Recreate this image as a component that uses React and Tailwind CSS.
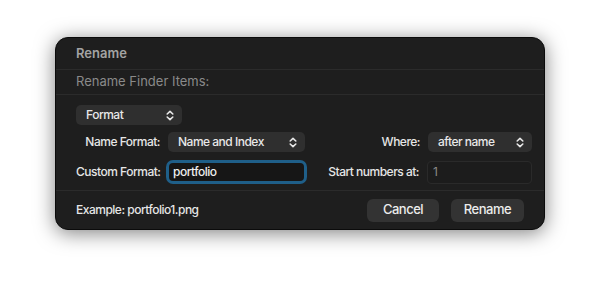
import React from 'react';

function Chevrons() {
  return (
    <svg width="8" height="11" viewBox="0 0 8 11" fill="none" stroke="#e6e6e6" strokeWidth="1.6" strokeLinecap="round" strokeLinejoin="round">
      <path d="M1.2 4 L4 1.3 L6.8 4" />
      <path d="M1.2 7 L4 9.7 L6.8 7" />
    </svg>
  );
}

function Popup({ label, className = '' }) {
  return (
    <div className={`flex items-center justify-between h-[20px] rounded-[5px] bg-[#2f2f2f] pl-[10px] pr-[8px] text-[12px] text-[#e8e8e8] whitespace-nowrap ${className}`}>
      <span>{label}</span>
      <Chevrons />
    </div>
  );
}

export default function App() {
  return (
    <div
      className="w-[600px] h-[304px] bg-white pt-[37px] pl-[55px]"
      style={{ fontFamily: 'Inter, "Noto Sans", sans-serif' }}
    >
      <div className="w-[490px] h-[193px] rounded-[13px] bg-[#1e1e1e] border border-[#0b0b0b] shadow-[0_3px_20px_rgba(0,0,0,0.5)] flex flex-col overflow-hidden font-medium tracking-[-0.5px]">
        {/* Title */}
        <div className="h-[32px] flex items-center pl-[20px] border-b border-[#2b2b2b]">
          <span className="text-[13px] font-semibold text-[#a3a3a3] tracking-normal">Rename</span>
        </div>
        <div className="h-[25px] flex items-center pl-[20px] border-b border-[#2b2b2b]">
          <span className="text-[13px] font-normal text-[#8a8a8a] tracking-normal">Rename Finder Items:</span>
        </div>

        {/* Body */}
        <div className="h-[96px] pl-[20px] pr-[12px] pt-[10px] border-b border-[#2b2b2b] flex flex-col whitespace-nowrap">
          <Popup label="Format" className="w-[106px]" />

          <div className="flex items-center mt-[7px] h-[20px]">
            <span className="w-[84px] text-right text-[12px] text-[#e6e6e6]">Name Format:</span>
            <Popup label="Name and Index" className="w-[137px] ml-[8px]" />
            <span className="flex-1 text-right text-[12px] text-[#e6e6e6]">Where:</span>
            <Popup label="after name" className="w-[104px] ml-[8px]" />
          </div>

          <div className="flex items-center mt-[8px] h-[24px]">
            <span className="w-[84px] text-right text-[12px] text-[#e6e6e6]">Custom Format:</span>
            <div className="ml-[6px] w-[141px] h-[24px] rounded-[7px] bg-[#1f5f89] p-[3px]">
              <div className="w-full h-full rounded-[4px] bg-[#161616] flex items-center pl-[4px] text-[12px] text-[#f0f0f0]">
                portfolio
              </div>
            </div>
            <span className="flex-1 text-right text-[12px] text-[#e6e6e6]">Start numbers at:</span>
            <div className="ml-[8px] w-[105px] h-[23px] rounded-[4px] bg-[#1c1c1c] border border-[#2a2a2a] flex items-center pl-[5px] text-[12px] font-normal text-[#8a8a8a]">
              1
            </div>
          </div>
        </div>

        {/* Footer */}
        <div className="flex-1 flex items-center pl-[20px] pr-[20px]">
          <span className="text-[12px] text-[#e6e6e6]">Example: portfolio1.png</span>
          <div className="ml-auto flex gap-[12px]">
            <button className="w-[72px] h-[23px] rounded-[6px] bg-[#333333] text-[13px] text-[#ececec]">Cancel</button>
            <button className="w-[73px] h-[23px] rounded-[6px] bg-[#333333] text-[13px] text-[#ececec]">Rename</button>
          </div>
        </div>
      </div>
    </div>
  );
}
